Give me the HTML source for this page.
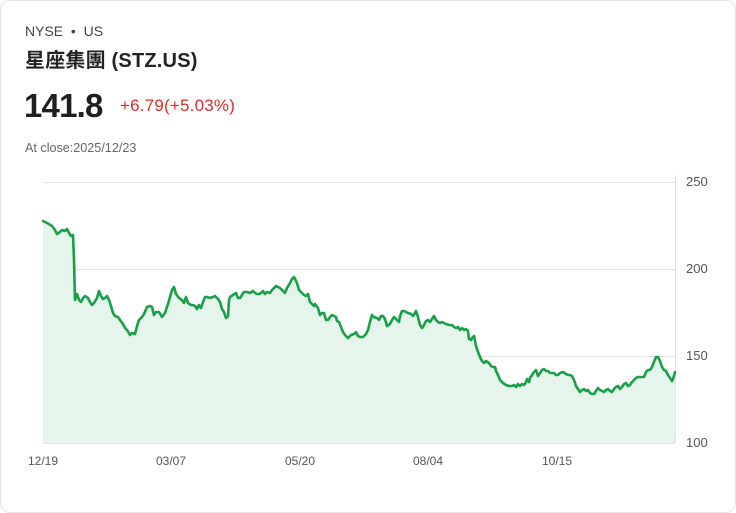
<!DOCTYPE html>
<html><head><meta charset="utf-8"><style>
body{margin:0;background:#fff;font-family:"Liberation Sans","Noto Sans CJK TC",sans-serif;}
.card{position:absolute;left:0;top:0;width:734px;height:511px;border:1px solid #e3e6ea;border-radius:10px;}
.t{position:absolute;white-space:nowrap;}
</style></head><body>
<div class="card"></div>
<div class="t" style="left:25px;top:23px;font-size:14px;color:#444;">NYSE &nbsp;•&nbsp; US</div>
<div class="t" style="left:25px;top:44px;font-size:20px;font-weight:bold;color:#222;letter-spacing:0.2px;">星座集團 (STZ.US)</div>
<div class="t" style="left:24px;top:87px;font-size:33px;font-weight:bold;color:#1f1f1f;letter-spacing:-0.8px;">141.8</div>
<div class="t" style="left:120px;top:96px;font-size:17px;color:#e02a2a;letter-spacing:0.2px;">+6.79(+5.03%)</div>
<div class="t" style="left:25px;top:141px;font-size:12.6px;color:#666;">At close:2025/12/23</div>
<svg style="position:absolute;left:0;top:0" width="736" height="513">
<g stroke="#e2e2e2" stroke-width="1">
<line x1="43" y1="182.5" x2="675" y2="182.5"/>
<line x1="43" y1="269.5" x2="675" y2="269.5"/>
<line x1="43" y1="356.5" x2="675" y2="356.5"/>
<line x1="43" y1="443.5" x2="675" y2="443.5"/>
<line x1="675.5" y1="175" x2="675.5" y2="443"/>
</g>
<g font-family="Liberation Sans,sans-serif" font-size="13" fill="#555">
<text x="686" y="186">250</text><text x="686" y="273">200</text><text x="686" y="360">150</text><text x="686" y="447">100</text>
</g>
<g font-family="Liberation Sans,sans-serif" font-size="12" fill="#555" text-anchor="middle">
<text x="43" y="465">12/19</text><text x="171" y="465">03/07</text><text x="300" y="465">05/20</text><text x="428" y="465">08/04</text><text x="557" y="465">10/15</text>
</g>
<polygon fill="#e6f5ec" points="43,443 43,221 47,223 52,226 55,230 57,234 60,232 62,230 65,231 67,229 69,233 71,236 73,235 74,260 75,300 77,294 79,300 81,302 83,298 85,296 88,298 90,302 92,305 94,303 97,298 99,291 101,296 103,299 105,298 107,296 109,300 111,306 113,313 115,316 118,317 120,320 123,324 125,328 127,330 130,335 132,333 135,334 137,326 139,320 142,317 144,314 147,307 150,306 152,307 154,315 156,312 159,312 162,317 165,313 168,304 170,297 172,290 174,287 176,294 179,298 182,300 184,303 186,297 188,303 191,305 193,305 195,306 197,309 199,305 201,308 203,302 205,297 207,297 210,298 213,297 215,296 218,299 220,302 222,309 224,312 226,318 228,316 229,300 230,297 233,295 236,293 238,298 240,298 242,295 244,292 247,292 250,293 253,291 255,293 257,294 259,294 261,293 263,291 265,294 267,292 270,293 272,290 274,288 276,286 278,287 280,288 282,290 285,293 287,288 290,283 292,279 294,277 297,283 299,290 302,293 304,295 306,296 308,294 310,302 312,304 314,306 315,304 318,308 320,315 322,313 324,313 326,320 328,320 330,317 332,315 336,317 337,321 339,322 341,327 343,332 345,335 348,338 351,335 354,334 356,332 358,336 360,337 363,337 366,334 368,330 370,322 372,315 374,317 377,318 379,320 381,316 383,316 385,319 387,326 390,324 392,320 394,317 397,320 399,322 400,316 402,311 404,311 406,312 408,313 411,314 413,316 415,313 416,311 418,317 420,325 422,328 424,325 426,321 428,320 430,322 432,319 434,316 436,320 438,322 440,323 442,322 444,323 446,324 449,325 452,325 454,327 456,328 458,327 460,330 462,328 464,330 466,329 468,331 469,339 471,340 472,338 474,336 476,346 478,352 480,357 482,361 484,363 486,361 489,363 491,366 493,367 495,367 496,371 498,375 500,380 503,383 506,385 509,386 512,386 514,385 516,387 518,384 520,386 522,384 524,385 526,382 527,379 529,382 530,378 532,375 534,372 536,370 538,376 540,373 542,370 544,369 546,371 548,371 550,373 552,373 554,373 556,375 558,375 560,373 563,372 566,374 568,375 570,375 572,376 574,380 576,386 578,389 580,392 582,390 584,389 586,391 588,390 590,393 592,394 594,394 596,391 598,388 600,390 602,391 604,392 606,390 608,389 610,391 612,392 614,389 616,387 618,386 620,389 622,387 624,384 626,383 628,386 630,385 632,382 634,380 636,378 638,377 640,377 642,377 644,377 646,372 648,370 650,370 652,367 654,362 656,357 658,357 660,361 662,367 664,370 666,371 668,375 670,378 672,381 673,379 675,372 675,443"/>
<polyline fill="none" stroke="#18a048" stroke-width="2.6" stroke-linejoin="round" stroke-linecap="round" points="43,221 47,223 52,226 55,230 57,234 60,232 62,230 65,231 67,229 69,233 71,236 73,235 74,260 75,300 77,294 79,300 81,302 83,298 85,296 88,298 90,302 92,305 94,303 97,298 99,291 101,296 103,299 105,298 107,296 109,300 111,306 113,313 115,316 118,317 120,320 123,324 125,328 127,330 130,335 132,333 135,334 137,326 139,320 142,317 144,314 147,307 150,306 152,307 154,315 156,312 159,312 162,317 165,313 168,304 170,297 172,290 174,287 176,294 179,298 182,300 184,303 186,297 188,303 191,305 193,305 195,306 197,309 199,305 201,308 203,302 205,297 207,297 210,298 213,297 215,296 218,299 220,302 222,309 224,312 226,318 228,316 229,300 230,297 233,295 236,293 238,298 240,298 242,295 244,292 247,292 250,293 253,291 255,293 257,294 259,294 261,293 263,291 265,294 267,292 270,293 272,290 274,288 276,286 278,287 280,288 282,290 285,293 287,288 290,283 292,279 294,277 297,283 299,290 302,293 304,295 306,296 308,294 310,302 312,304 314,306 315,304 318,308 320,315 322,313 324,313 326,320 328,320 330,317 332,315 336,317 337,321 339,322 341,327 343,332 345,335 348,338 351,335 354,334 356,332 358,336 360,337 363,337 366,334 368,330 370,322 372,315 374,317 377,318 379,320 381,316 383,316 385,319 387,326 390,324 392,320 394,317 397,320 399,322 400,316 402,311 404,311 406,312 408,313 411,314 413,316 415,313 416,311 418,317 420,325 422,328 424,325 426,321 428,320 430,322 432,319 434,316 436,320 438,322 440,323 442,322 444,323 446,324 449,325 452,325 454,327 456,328 458,327 460,330 462,328 464,330 466,329 468,331 469,339 471,340 472,338 474,336 476,346 478,352 480,357 482,361 484,363 486,361 489,363 491,366 493,367 495,367 496,371 498,375 500,380 503,383 506,385 509,386 512,386 514,385 516,387 518,384 520,386 522,384 524,385 526,382 527,379 529,382 530,378 532,375 534,372 536,370 538,376 540,373 542,370 544,369 546,371 548,371 550,373 552,373 554,373 556,375 558,375 560,373 563,372 566,374 568,375 570,375 572,376 574,380 576,386 578,389 580,392 582,390 584,389 586,391 588,390 590,393 592,394 594,394 596,391 598,388 600,390 602,391 604,392 606,390 608,389 610,391 612,392 614,389 616,387 618,386 620,389 622,387 624,384 626,383 628,386 630,385 632,382 634,380 636,378 638,377 640,377 642,377 644,377 646,372 648,370 650,370 652,367 654,362 656,357 658,357 660,361 662,367 664,370 666,371 668,375 670,378 672,381 673,379 675,372"/>
</svg>
</body></html>
